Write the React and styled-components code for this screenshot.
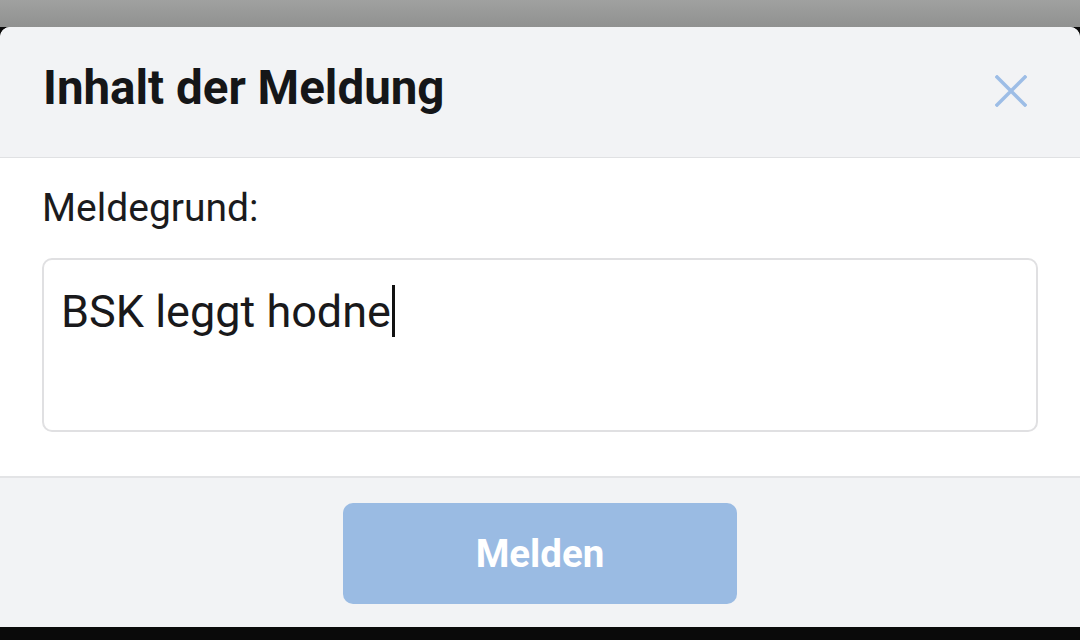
import React from 'react';
import styled, { createGlobalStyle } from 'styled-components';

const GlobalStyle = createGlobalStyle`
    html, body {
        margin: 0;
        padding: 0;
        background: #0a0a0a;
    }
    body {
        font-family: Roboto, "Noto Sans", "Liberation Sans", sans-serif;
    }
`;

const Screen = styled.div`
    width: 1080px;
    height: 640px;
    display: flex;
    flex-direction: column;
    background: linear-gradient(#a0a1a0, #909190 27px, #0a0a0a 27px);
    padding-top: 27px;
    box-sizing: border-box;
    overflow: hidden;
`;

const Modal = styled.div`
    display: flex;
    flex-direction: column;
    border-radius: 10px 10px 0 0;
    overflow: hidden;
    background: #fff;
`;

const Header = styled.div`
    height: 131px;
    box-sizing: border-box;
    display: flex;
    align-items: center;
    justify-content: space-between;
    padding: 0 52px 9px 43px;
    background: #f2f3f5;
    border-bottom: 1px solid #e0e1e3;
`;

const Title = styled.h1`
    margin: 0;
    font-size: 47.5px;
    line-height: 56px;
    font-weight: 700;
    color: #151618;
`;

const CloseButton = styled.button`
    border: 0;
    background: none;
    padding: 0;
    margin-top: 7px;
    width: 34px;
    height: 34px;
    display: flex;
    align-items: center;
    justify-content: center;
    cursor: pointer;
`;

const Body = styled.div`
    height: 320px;
    padding: 26px 42px 0 42px;
    box-sizing: border-box;
    display: flex;
    flex-direction: column;
    gap: 26px;
    border-bottom: 2px solid #e3e4e6;
`;

const Label = styled.label`
    font-size: 39px;
    color: #1b1b1d;
    line-height: 48px;
`;

const TextBox = styled.div`
    height: 174px;
    box-sizing: border-box;
    border: 2px solid #e0e0e2;
    border-radius: 10px;
    padding: 25px 17px;
    font-size: 45px;
    line-height: 54px;
    color: #19191b;
`;

const Caret = styled.span`
    display: inline-block;
    width: 3px;
    height: 52px;
    background: #111;
    vertical-align: -10px;
    margin-left: 1px;
`;

const Footer = styled.div`
    height: 149px;
    background: #f2f3f5;
    display: flex;
    justify-content: center;
    padding-top: 25px;
    box-sizing: border-box;
`;

const SubmitButton = styled.button`
    width: 394px;
    height: 101px;
    border: 0;
    border-radius: 10px;
    background: #9abbe3;
    color: #fff;
    font-family: inherit;
    font-size: 38.5px;
    font-weight: 700;
`;

const NavBar = styled.div`
    flex: 1;
    background: #0a0a0a;
`;

export default function App() {
    return (
        <>
            <GlobalStyle />
            <Screen>
                <Modal>
                    <Header>
                        <Title>Inhalt der Meldung</Title>
                        <CloseButton aria-label="Schließen">
                            <svg width="32" height="32" viewBox="0 0 32 32">
                                <path d="M2 2 L30 30 M30 2 L2 30" stroke="#9dbde6" strokeWidth="3.5" strokeLinecap="square" />
                            </svg>
                        </CloseButton>
                    </Header>
                    <Body>
                        <Label>Meldegrund:</Label>
                        <TextBox>BSK leggt hodne<Caret /></TextBox>
                    </Body>
                    <Footer>
                        <SubmitButton disabled>Melden</SubmitButton>
                    </Footer>
                </Modal>
                <NavBar />
            </Screen>
        </>
    );
}
